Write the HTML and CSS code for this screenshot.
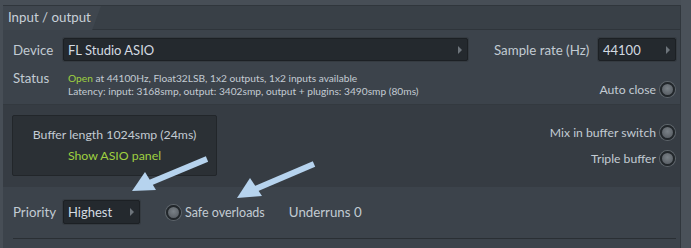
FILE: index.html
```html
<!DOCTYPE html>
<html>
<head>
<meta charset="utf-8">
<link rel="stylesheet" href="styles.css">
</head>
<body>
<div class="frame">
  <div class="panel">
    <div class="header">
      <div class="tab">Input / output</div>
    </div>
    <div class="sec sec1">
      <div class="row row-device">
        <span class="label label-device">Device</span>
        <div class="dropdown dd-device"><span>FL Studio ASIO</span><i class="tri"></i></div>
        <span class="label label-rate">Sample rate (Hz)</span>
        <div class="dropdown dd-rate"><span>44100</span><i class="tri"></i></div>
      </div>
      <div class="row row-status">
        <span class="label label-status">Status</span>
        <div class="status-text">
          <div><span class="green">Open</span> at 44100Hz, Float32LSB, 1x2 outputs, 1x2 inputs available</div>
          <div>Latency: input: 3168smp, output: 3402smp, output + plugins: 3490smp (80ms)</div>
        </div>
        <div class="check check-auto"><span>Auto close</span><i class="radio"></i></div>
      </div>
    </div>
    <div class="sec sec2">
      <div class="bufbox">
        <div class="buflen">Buffer length 1024smp (24ms)</div>
        <div class="green asio">Show ASIO panel</div>
      </div>
      <div class="checks">
        <div class="check"><span>Mix in buffer switch</span><i class="radio"></i></div>
        <div class="check"><span>Triple buffer</span><i class="radio"></i></div>
      </div>
    </div>
    <div class="sec sec3">
      <div class="row row-prio">
        <span class="label label-prio">Priority</span>
        <div class="dropdown dd-prio"><span>Highest</span><i class="tri"></i></div>
        <div class="check check-safe"><i class="radio"></i><span>Safe overloads</span></div>
        <span class="label underruns">Underruns 0</span>
      </div>
      <div class="divider"></div>
    </div>
  </div>
  <div class="strip"></div>
  <svg class="arrows" width="691" height="248" viewBox="0 0 691 248">
    <g fill="#b6d3ee" stroke="#b6d3ee">
      <line x1="207" y1="159" x2="147" y2="184" stroke-width="6" stroke-linecap="butt"/>
      <polygon points="132,191 145,172 156,190" stroke="none"/>
      <line x1="314" y1="164" x2="253" y2="190" stroke-width="6" stroke-linecap="butt"/>
      <polygon points="237,198 250,178 262,196" stroke="none"/>
    </g>
  </svg>
</div>
</body>
</html>
```

FILE: styles.css
```css
* { box-sizing: border-box; }
html, body { margin: 0; padding: 0; }
body {
  background: #474e56;
  font-family: Lato, "Noto Sans", sans-serif;
  color: #c3cbd3;
  width: 691px;
  height: 248px;
  overflow: hidden;
}
.frame {
  position: relative;
  width: 691px;
  height: 248px;
  display: flex;
  background: #474e56;
}
.panel {
  margin-left: 3px;
  margin-top: 5px;
  width: 678px;
  height: 243px;
  background: #3c434b;
  border-top: 1px solid #30363c;
  border-right: 1px solid #30363c;
  display: flex;
  flex-direction: column;
}
.strip { flex: 1; background: #4a5159; }
.header {
  height: 24px;
  background: #394047;
  border-bottom: 1px solid #2f353b;
  display: flex;
}
.tab {
  width: 98px;
  height: 24px;
  background: #3f464e;
  clip-path: polygon(0 0, 100% 0, 91% 100%, 0 100%);
  font-size: 13.3px;
  color: #c9d1d9;
  padding-left: 5px;
  line-height: 23px;
}
.sec { display: flex; }
.sec1 {
  height: 74px;
  flex-direction: column;
  padding: 8px 4px 0 10px;
  background: #3c434b;
}
.row { display: flex; align-items: center; }
.row-device { height: 23px; }
.label { font-size: 13.3px; color: #c2cbd3; }
.label-device { width: 50px; }
.dropdown {
  display: flex;
  align-items: center;
  justify-content: space-between;
  height: 23px;
  background: #24292e;
  border: 1px solid #1c2024;
  border-radius: 2px;
  box-shadow: 0 0 0 1px #353b41;
  color: #d3dae1;
  font-size: 13px;
  padding: 0 5px 0 4px;
}
.tri {
  width: 0; height: 0;
  border-top: 4px solid transparent;
  border-bottom: 4px solid transparent;
  border-left: 4px solid #6d747b;
}
.dd-device { width: 405px; }
.label-rate { margin-left: 26px; width: 104px; }
.dd-rate { width: 78px; }
.row-status { align-items: flex-start; margin-top: 7px; }
.label-status { width: 55px; line-height: 16px; margin-top: 2px; }
.status-text { font-size: 10.2px; line-height: 13px; color: #c3cbd3; margin-top: 4px; }
.green { color: #9fd140; }
.check {
  display: flex;
  align-items: center;
  font-size: 12.2px;
  color: #c3cbd3;
  gap: 4px;
}
.check-auto { margin-left: auto; margin-top: 14px; margin-right: 1px; }
.radio {
  display: inline-block;
  width: 15px;
  height: 15px;
  border-radius: 50%;
  background: radial-gradient(circle at 50% 40%, #7a8187 0%, #5d6369 70%);
  border: 2px solid #22272b;
  box-shadow: 0 0 0 1px #5e656b;
}
.sec2 {
  height: 83px;
  background: #363c43;
  border-top: 1px solid #33393f;
  padding: 10px 5px 0 9px;
  justify-content: space-between;
  align-items: flex-start;
}
.bufbox {
  width: 205px;
  height: 61px;
  background: #2b3035;
  border: 1px solid #22262a;
  border-radius: 2px;
  display: flex;
  flex-direction: column;
  align-items: center;
  padding-top: 10px;
  font-size: 12.3px;
}
.buflen { color: #c3cbd3; line-height: 18px; }
.asio { line-height: 18px; margin-top: 3px; }
.checks {
  display: flex;
  flex-direction: column;
  align-items: flex-end;
  gap: 11px;
  padding-top: 10px;
}
.sec3 {
  flex: 1;
  flex-direction: column;
  padding: 13px 4px 0 10px;
  background: #3c434b;
}
.row-prio { height: 24px; }
.label-prio { width: 50px; }
.dd-prio { width: 77px; height: 24px; }
.check-safe { margin-left: 26px; gap: 4px; font-size: 12.5px; }
.underruns { margin-left: 24px; }
.divider {
  margin-top: 14px;
  margin-left: 0;
  height: 1px;
  background: #2a2f34;
}
.arrows { position: absolute; left: 0; top: 0; pointer-events: none; }
```
